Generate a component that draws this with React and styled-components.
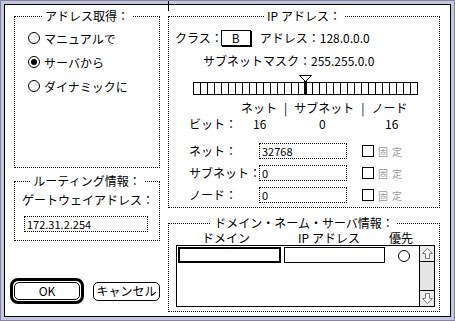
import React from "react";
import styled, { createGlobalStyle } from "styled-components";

const GlobalStyle = createGlobalStyle`
  html, body { margin: 0; padding: 0; background: #fff; }
  body {
    font-family: "Noto Sans CJK JP", "Noto Sans", sans-serif;
    font-size: 12px;
    color: #000;
  }
`;

const Window = styled.div`
  position: relative;
  width: 455px;
  height: 321px;
  box-sizing: border-box;
  background: #c6c6de;
  border: 1px solid #8585a3;
  padding: 3px;
`;

const Panel = styled.div`
  height: 100%;
  box-sizing: border-box;
  border: 1px solid #000;
  background: #fff;
  display: grid;
  grid-template-columns: 146px 272px;
  column-gap: 8px;
  align-items: start;
  padding: 4px 10px 0 9px;
`;

const Column = styled.div`
  display: flex;
  flex-direction: column;
`;

const Group = styled.fieldset`
  margin: ${p => p.$mt || 0}px 0 0 0;
  padding: 0;
  min-width: 0;
  height: ${p => p.$h}px;
  box-sizing: border-box;
  border: 1px dotted #000;
`;

const Legend = styled.legend`
  margin: 0 auto;
  padding: 0 3px;
  font-size: 12px;
  line-height: 14px;
  white-space: nowrap;
`;

const Text = styled.span`
  line-height: 14px;
  white-space: nowrap;
`;

/* ---------- address source radios ---------- */

const RadioList = styled.div`
  display: flex;
  flex-direction: column;
  gap: 8px;
  padding: 7px 0 0 13px;
`;

const RadioRow = styled.label`
  display: flex;
  align-items: center;
  gap: 4px;
  height: 16px;
  white-space: nowrap;
`;

const Radio = styled.span`
  width: 12px;
  height: 12px;
  box-sizing: border-box;
  border: 1px solid #000;
  border-radius: 50%;
  display: flex;
  align-items: center;
  justify-content: center;
  flex: none;
  &::after {
    content: "";
    width: 6px;
    height: 6px;
    border-radius: 50%;
    background: ${p => (p.$on ? "#000" : "transparent")};
  }
`;

/* ---------- routing ---------- */

const RouteBody = styled.div`
  display: flex;
  flex-direction: column;
  padding: 5px 0 0 7px;
`;

const Field = styled.div`
  width: ${p => p.$w}px;
  height: 16px;
  box-sizing: border-box;
  border: ${p => (p.$bold ? "2px solid #000" : p.$solid ? "1px solid #000" : "1px dotted #000")};
  font-size: 11px;
  line-height: 14px;
  padding-left: 2px;
  white-space: nowrap;
  background: #fff;
`;

const GatewayField = styled(Field)`
  margin: 9px 0 0 2px;
`;

/* ---------- buttons ---------- */

const Buttons = styled.div`
  display: flex;
  align-items: center;
  gap: 9px;
  margin: 37px 0 0 -4px;
`;

const DefaultRing = styled.div`
  border: 3px solid #000;
  border-radius: 8px;
  padding: 1px;
`;

const Button = styled.button`
  font: inherit;
  color: #000;
  background: #fff;
  border: 1px solid #000;
  border-radius: 5px;
  height: ${p => p.$h || 18}px;
  width: ${p => p.$w}px;
  padding: 0;
  line-height: 14px;
  box-sizing: border-box;
`;

/* ---------- IP address group ---------- */

const ClassRow = styled.div`
  display: flex;
  align-items: center;
  height: 16px;
  margin: 7px 0 0 6px;
`;

const PopBox = styled.div`
  width: 30px;
  height: 16px;
  box-sizing: border-box;
  border: 1px solid #000;
  box-shadow: 1px 1px 0 #000;
  margin-left: -2px;
  text-align: center;
  line-height: 14px;
`;

const AddrText = styled(Text)`
  margin-left: 9px;
`;

const MaskRow = styled.div`
  margin: 8px 0 0 34px;
  line-height: 14px;
  white-space: nowrap;
`;

const Slider = styled.div`
  position: relative;
  width: 225px;
  margin: 7px 0 0 24px;
  padding-top: 7px;
`;

const Bar = styled.div`
  display: flex;
  height: 13px;
  box-sizing: border-box;
  border: 1px solid #000;
  border-right: none;
`;

const Cell = styled.div`
  width: 7px;
  flex: none;
  box-sizing: border-box;
  border-right: 1px solid #000;
`;

const Marker = styled.svg`
  position: absolute;
  top: 0;
`;

const PartRow = styled.div`
  display: flex;
  gap: 7px;
  margin: 6px 0 0 72px;
  line-height: 14px;
  white-space: nowrap;
`;

const BitsRow = styled.div`
  display: grid;
  grid-template-columns: 64px 66px 66px auto;
  margin: 2px 0 0 20px;
  line-height: 14px;
`;

const FieldRows = styled.div`
  display: flex;
  flex-direction: column;
  gap: 6px;
  margin: 12px 0 0 20px;
`;

const FieldRow = styled.div`
  display: grid;
  grid-template-columns: 70px 88px auto auto;
  justify-content: start;
  align-items: center;
  height: 16px;
`;

const Check = styled.span`
  width: 12px;
  height: 12px;
  box-sizing: border-box;
  border: 1px solid #000;
  margin-left: 15px;
`;

const FixedLabel = styled.span`
  margin-left: 4px;
  font-size: 10px;
  letter-spacing: 4px;
  color: #9a9a9a;
  white-space: nowrap;
`;

/* ---------- DNS group ---------- */

const HeadRow = styled.div`
  display: grid;
  grid-template-columns: 96px 110px 34px;
  margin: 1px 0 0 9px;
  line-height: 14px;
  text-align: center;
  white-space: nowrap;
`;

const ListBox = styled.div`
  display: flex;
  width: 259px;
  height: 62px;
  box-sizing: border-box;
  border: 1px solid #000;
  margin: 0 0 0 7px;
`;

const ListRows = styled.div`
  flex: 1;
  display: grid;
  grid-template-columns: 103px 101px 1fr;
  column-gap: 3px;
  align-items: start;
  padding: 1px 0 0 1px;
`;

const ListRadio = styled(Radio)`
  justify-self: center;
  margin-top: 3px;
`;

const ScrollBar = styled.div`
  width: 15px;
  box-sizing: border-box;
  border-left: 1px solid #000;
  background: #e4e4e4;
  display: flex;
  flex-direction: column;
  justify-content: space-between;
`;

const ArrowBox = styled.div`
  height: 16px;
  box-sizing: border-box;
  background: #ececec;
  display: flex;
  align-items: center;
  justify-content: center;
  ${p => (p.$down ? "border-top: 1px solid #000;" : "border-bottom: 1px solid #000;")}
`;

const Cursor = styled.svg`
  position: absolute;
  left: 161px;
  top: 0;
`;

const Arrow = ({ down }) => (
  <svg width="11" height="11" viewBox="0 0 11 11" style={down ? { transform: "rotate(180deg)" } : undefined}>
    <path d="M5.5 0.5 L10.5 5.5 L7.5 5.5 L7.5 10.5 L3.5 10.5 L3.5 5.5 L0.5 5.5 Z" fill="#fff" stroke="#7a7a7a" strokeWidth="1" />
  </svg>
);

const netBits = 16;
const rows = [
  { label: "ネット：", value: "32768" },
  { label: "サブネット：", value: "0" },
  { label: "ノード：", value: "0" },
];

export default function App() {
  return (
    <>
      <GlobalStyle />
      <Window>
        <Panel>
          <Column>
            <Group $h={159}>
              <Legend>アドレス取得：</Legend>
              <RadioList>
                <RadioRow><Radio />マニュアルで</RadioRow>
                <RadioRow><Radio $on />サーバから</RadioRow>
                <RadioRow><Radio />ダイナミックに</RadioRow>
              </RadioList>
            </Group>
            <Group $h={67} $mt={6}>
              <Legend>ルーティング情報：</Legend>
              <RouteBody>
                <Text>ゲートウェイアドレス：</Text>
                <GatewayField $w={124}>172.31.2.254</GatewayField>
              </RouteBody>
            </Group>
            <Buttons>
              <DefaultRing>
                <Button $w={66}>OK</Button>
              </DefaultRing>
              <Button $w={70} $h={19}>キャンセル</Button>
            </Buttons>
          </Column>

          <Column>
            <Group $h={199}>
              <Legend>IP アドレス：</Legend>
              <ClassRow>
                <Text>クラス：</Text>
                <PopBox>B</PopBox>
                <AddrText>アドレス：128.0.0.0</AddrText>
              </ClassRow>
              <MaskRow>サブネットマスク：255.255.0.0</MaskRow>
              <Slider>
                <Bar>
                  {Array.from({ length: 32 }, (_, i) => <Cell key={i} />)}
                </Bar>
                <Marker width="13" height="20" viewBox="0 0 13 20" style={{ left: netBits * 7 - 6 }}>
                  <path d="M0.5 0.5 H12.5 L6.5 6.5 Z" fill="#fff" stroke="#000" strokeWidth="1" />
                  <rect x="5" y="6" width="3" height="14" fill="#000" />
                </Marker>
              </Slider>
              <PartRow>
                <span>ネット</span><span>|</span><span>サブネット</span><span>|</span><span>ノード</span>
              </PartRow>
              <BitsRow>
                <span>ビット：</span><span>16</span><span>0</span><span>16</span>
              </BitsRow>
              <FieldRows>
                {rows.map(r => (
                  <FieldRow key={r.label}>
                    <Text>{r.label}</Text>
                    <Field $w={88}>{r.value}</Field>
                    <Check />
                    <FixedLabel>固定</FixedLabel>
                  </FieldRow>
                ))}
              </FieldRows>
            </Group>

            <Group $h={96} $mt={8}>
              <Legend>ドメイン・ネーム・サーバ情報：</Legend>
              <HeadRow>
                <span>ドメイン</span><span>IP アドレス</span><span>優先</span>
              </HeadRow>
              <ListBox>
                <ListRows>
                  <Field $w={103} $bold />
                  <Field $w={101} $solid />
                  <ListRadio />
                </ListRows>
                <ScrollBar>
                  <ArrowBox><Arrow /></ArrowBox>
                  <ArrowBox $down><Arrow down /></ArrowBox>
                </ScrollBar>
              </ListBox>
            </Group>
          </Column>
        </Panel>
        <Cursor width="13" height="10" viewBox="0 0 13 10">
          <path d="M0 3.5 H13 M6.5 0 V10" stroke="#000" strokeWidth="1" />
        </Cursor>
      </Window>
    </>
  );
}
